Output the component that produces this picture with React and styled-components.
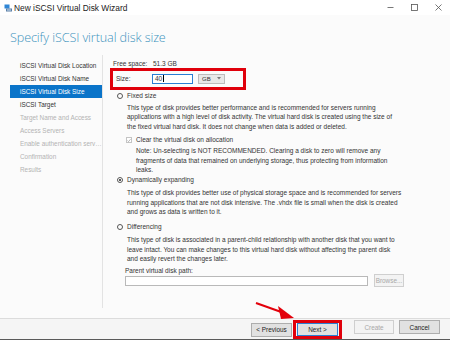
import React from "react";
import styled, { createGlobalStyle } from "styled-components";

const GlobalStyle = createGlobalStyle`
  html, body {
    margin: 0;
    padding: 0;
    background: #fbfbfb;
  }
  body {
    font-family: "Liberation Sans", Arial, sans-serif;
    color: #333;
  }
`;

const Window = styled.div`
  width: 450px;
  height: 340px;
  display: flex;
  flex-direction: column;
  background: #fbfbfb;
  border-bottom: 1px solid #5a5a5a;
  box-sizing: border-box;
  position: relative;
  overflow: hidden;
`;

const TitleBar = styled.div`
  height: 15px;
  background: #fff;
  display: flex;
  align-items: center;
  padding-left: 4px;
  gap: 2px;
  font-size: 8.4px;
  color: #222;
`;

const TitleText = styled.span`
  flex: 1;
`;

const WinControls = styled.div`
  display: flex;
  align-items: center;
`;

const WinButton = styled.div`
  width: 24px;
  height: 15px;
  display: flex;
  align-items: center;
  justify-content: center;
`;

const Header = styled.div`
  height: 40px;
  box-sizing: border-box;
  padding: 5px 0 0 10px;
  display: flex;
  align-items: center;
`;

const Heading = styled.h1`
  margin: 0;
  font-family: "Open Sans", sans-serif;
  font-weight: 300;
  font-size: 12.6px;
  color: #3d93bd;
  letter-spacing: -0.1px;
`;

const Body = styled.div`
  display: flex;
  height: 255px;
`;

const Nav = styled.div`
  width: 92px;
  margin-left: 10px;
  border-right: 1px solid #e3e3e3;
  padding-top: 4.5px;
  display: flex;
  flex-direction: column;
`;

const NavItem = styled.div`
  height: 13px;
  line-height: 13px;
  padding-left: 10px;
  font-size: 6.4px;
  white-space: nowrap;
  overflow: hidden;
  text-overflow: ellipsis;
  color: ${(p) => (p.$active ? "#fff" : p.$disabled ? "#b3b3b3" : "#333")};
  background: ${(p) => (p.$active ? "#0a74c9" : "transparent")};
`;

const Content = styled.div`
  flex: 1;
  padding: 5px 0 0 10px;
  font-size: 6.5px;
  line-height: 9.5px;
  color: #333;
`;

const FreeRow = styled.div`
  display: flex;
  height: 8px;
  line-height: 8px;
`;

const FreeLabel = styled.span`
  width: 40px;
`;

const SizeBox = styled.div`
  margin-left: -3px;
  width: 127px;
  height: 16px;
  border: 3px solid #e0000b;
  display: flex;
  align-items: center;
  padding-left: 3px;
`;

const SizeLabel = styled.span`
  width: 36px;
`;

const TextInput = styled.div`
  box-sizing: border-box;
  width: ${(p) => p.$width}px;
  height: ${(p) => p.$height || 10}px;
  background: #fff;
  border: 1px solid ${(p) => (p.$focus ? "#2a7fd4" : "#b9b9b9")};
  display: flex;
  align-items: center;
  padding-left: 2px;
  line-height: 1;
`;

const Caret = styled.span`
  display: inline-block;
  width: 0.6px;
  height: 7px;
  background: #000;
  margin-left: 0.5px;
`;

const Select = styled.div`
  box-sizing: border-box;
  margin-left: 5px;
  width: 27px;
  height: 10px;
  background: #e8e8e8;
  border: 1px solid #bdbdbd;
  display: flex;
  align-items: center;
  justify-content: space-between;
  padding: 0 3px;
  line-height: 1;
  font-size: 6px;
`;

const Option = styled.div`
  display: flex;
  align-items: center;
  gap: 4px;
  height: 9.5px;
  margin-top: ${(p) => p.$mt || 0}px;
  padding-left: ${(p) => p.$indent || 4}px;
`;

const Radio = styled.span`
  box-sizing: border-box;
  width: 6px;
  height: 6px;
  border-radius: 50%;
  border: 1px solid #555;
  background: #fff;
  display: flex;
  align-items: center;
  justify-content: center;
  &::after {
    content: "";
    width: 2.4px;
    height: 2.4px;
    border-radius: 50%;
    background: ${(p) => (p.$checked ? "#222" : "transparent")};
  }
`;

const Check = styled.span`
  box-sizing: border-box;
  width: 6px;
  height: 6px;
  border: 1px solid #c4c4c4;
  background: #fff;
  display: flex;
  align-items: center;
  justify-content: center;
`;

const Para = styled.p`
  margin: ${(p) => p.$mt || 0}px 0 0 0;
  padding-left: ${(p) => p.$indent || 14}px;
  white-space: nowrap;
`;

const PathLabel = styled.div`
  margin-top: 3px;
  padding-left: 12px;
  line-height: 8px;
`;

const PathRow = styled.div`
  display: flex;
  align-items: center;
  gap: 6px;
  padding-left: 12px;
  height: 12px;
`;

const Button = styled.div`
  box-sizing: border-box;
  width: ${(p) => p.$width || 40}px;
  height: ${(p) => p.$height || 14}px;
  display: flex;
  align-items: center;
  justify-content: center;
  font-size: 6.4px;
  background: ${(p) => (p.$disabled ? "#f3f3f3" : "#e1e1e1")};
  color: ${(p) => (p.$disabled ? "#a8a8a8" : "#222")};
  border: 1px solid
    ${(p) => (p.$default ? "#2a7fd4" : p.$disabled ? "#cfcfcf" : "#adadad")};
`;

const Spacer = styled.div`
  height: 10px;
`;

const Footer = styled.div`
  flex: 1;
  border-top: 1px solid #dcdcdc;
  background: #f5f5f5;
  display: flex;
  align-items: flex-start;
  justify-content: flex-end;
  padding: 1px 10px 0 0;
`;

const ButtonGroup = styled.div`
  display: flex;
  align-items: center;
  margin-right: ${(p) => p.$mr || 0}px;
  gap: ${(p) => p.$gap || 0}px;
`;

const NextHighlight = styled.div`
  box-sizing: border-box;
  width: 49px;
  height: 19px;
  margin-left: 1px;
  border: 3px solid #e0000b;
  display: flex;
  align-items: center;
  justify-content: center;
`;

const Arrow = styled.svg`
  position: absolute;
  left: 250px;
  top: 298px;
`;

const navItems = [
  { label: "iSCSI Virtual Disk Location" },
  { label: "iSCSI Virtual Disk Name" },
  { label: "iSCSI Virtual Disk Size", active: true },
  { label: "iSCSI Target" },
  { label: "Target Name and Access", disabled: true },
  { label: "Access Servers", disabled: true },
  { label: "Enable authentication services", disabled: true },
  { label: "Confirmation", disabled: true },
  { label: "Results", disabled: true },
];

const lines = (arr) =>
  arr.map((l, i) => (
    <React.Fragment key={i}>
      {l}
      {i < arr.length - 1 && <br />}
    </React.Fragment>
  ));

const AppIcon = () => (
  <svg width="8" height="8" viewBox="0 0 8 8">
    <rect x="0.5" y="0.5" width="5" height="4" fill="#2f86d6" />
    <rect x="2" y="4.5" width="6" height="3" fill="#5a7fa6" />
    <rect x="3" y="5.5" width="4" height="1" fill="#cfe3f5" />
  </svg>
);

export default function App() {
  return (
    <>
      <GlobalStyle />
      <Window>
        <TitleBar>
          <AppIcon />
          <TitleText>New iSCSI Virtual Disk Wizard</TitleText>
          <WinControls>
            <WinButton>
              <svg width="7" height="7" viewBox="0 0 7 7">
                <line x1="0.5" y1="3.5" x2="6.5" y2="3.5" stroke="#555" strokeWidth="0.8" />
              </svg>
            </WinButton>
            <WinButton>
              <svg width="7" height="7" viewBox="0 0 7 7">
                <rect x="0.5" y="0.5" width="6" height="6" fill="none" stroke="#555" strokeWidth="0.8" />
              </svg>
            </WinButton>
            <WinButton>
              <svg width="7" height="7" viewBox="0 0 7 7">
                <path d="M0.5 0.5 L6.5 6.5 M6.5 0.5 L0.5 6.5" stroke="#555" strokeWidth="0.8" />
              </svg>
            </WinButton>
          </WinControls>
        </TitleBar>

        <Header>
          <Heading>Specify iSCSI virtual disk size</Heading>
        </Header>

        <Body>
          <Nav>
            {navItems.map((item) => (
              <NavItem key={item.label} $active={item.active} $disabled={item.disabled}>
                {item.label}
              </NavItem>
            ))}
          </Nav>

          <Content>
            <FreeRow>
              <FreeLabel>Free space:</FreeLabel>
              <span>51.3 GB</span>
            </FreeRow>

            <SizeBox>
              <SizeLabel>Size:</SizeLabel>
              <TextInput $width={41} $focus>
                40<Caret />
              </TextInput>
              <Select>
                <span>GB</span>
                <svg width="4" height="3" viewBox="0 0 4 3">
                  <path d="M0 0 L4 0 L2 2.5 Z" fill="#777" />
                </svg>
              </Select>
            </SizeBox>

            <Option $mt={1.5}>
              <Radio />
              <span>Fixed size</span>
            </Option>
            <Para $mt={2}>
              {lines([
                "This type of disk provides better performance and is recommended for servers running",
                "applications with a high level of disk activity. The virtual hard disk is created using the size of",
                "the fixed virtual hard disk. It does not change when data is added or deleted.",
              ])}
            </Para>
            <Option $mt={4} $indent={13}>
              <Check>
                <svg width="5" height="5" viewBox="0 0 5 5">
                  <path d="M0.6 2.6 L1.9 3.9 L4.4 0.9" fill="none" stroke="#8a8a8a" strokeWidth="0.8" />
                </svg>
              </Check>
              <span>Clear the virtual disk on allocation</span>
            </Option>
            <Para $mt={1.5} $indent={23}>
              {lines([
                "Note: Un-selecting is NOT RECOMMENDED. Clearing a disk to zero will remove any",
                "fragments of data that remained on underlying storage, thus protecting from information",
                "leaks.",
              ])}
            </Para>

            <Option $mt={0.5}>
              <Radio $checked />
              <span>Dynamically expanding</span>
            </Option>
            <Para $mt={3.5}>
              {lines([
                "This type of disk provides better use of physical storage space and is recommended for servers",
                "running applications that are not disk intensive. The .vhdx file is small when the disk is created",
                "and grows as data is written to it.",
              ])}
            </Para>

            <Option $mt={5.5}>
              <Radio />
              <span>Differencing</span>
            </Option>
            <Para $mt={3.5}>
              {lines([
                "This type of disk is associated in a parent-child relationship with another disk that you want to",
                "leave intact. You can make changes to this virtual hard disk without affecting the parent disk",
                "and easily revert the changes later.",
              ])}
            </Para>

            <PathLabel>Parent virtual disk path:</PathLabel>
            <PathRow>
              <TextInput $width={243} $height={10} />
              <Button $width={30} $height={13} $disabled>
                Browse...
              </Button>
            </PathRow>
          </Content>
        </Body>

        <Spacer />
        <Footer>
          <ButtonGroup $mr={12}>
            <Button $width={41}>&lt; Previous</Button>
            <NextHighlight>
              <Button $width={41} $height={13} $default>
                Next &gt;
              </Button>
            </NextHighlight>
          </ButtonGroup>
          <ButtonGroup $gap={5}>
            <Button $width={40} $disabled>
              Create
            </Button>
            <Button $width={41}>Cancel</Button>
          </ButtonGroup>
        </Footer>

        <Arrow width="50" height="25" viewBox="0 0 50 25">
          <line x1="6" y1="5" x2="34" y2="15" stroke="#e3000b" strokeWidth="2" />
          <path d="M44 20 L28 8 L31 21 Z" fill="#e3000b" />
        </Arrow>
      </Window>
    </>
  );
}
